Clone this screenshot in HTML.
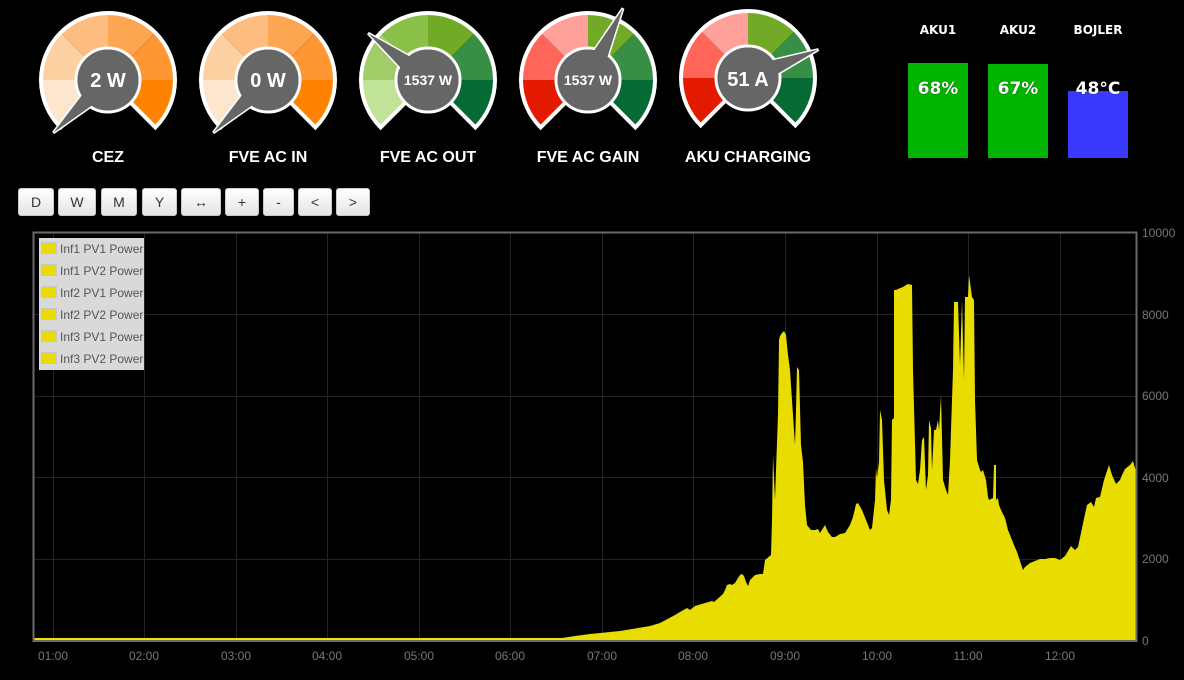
<!DOCTYPE html>
<html><head><meta charset="utf-8">
<style>
html,body{margin:0;padding:0;background:#000;width:1184px;height:680px;overflow:hidden;font-family:"Liberation Sans",Arial,sans-serif;}
.btn{position:absolute;top:188px;height:28px;border:1px solid #c8c8c8;border-radius:3px;background:linear-gradient(#fff,#e4e4e4);box-sizing:border-box;font-size:14px;color:#333;text-align:center;line-height:27px;}
.lbl{position:absolute;width:140px;text-align:center;color:#fff;font-weight:bold;font-size:16px;top:149px;}
.bl{position:absolute;width:80px;text-align:center;color:#fff;font-weight:bold;font-size:12px;top:23px;font-family:"DejaVu Sans",sans-serif;}
.bar{position:absolute;width:60px;}
.bt{position:absolute;width:80px;text-align:center;color:#fff;font-weight:bold;font-size:17px;top:79px;text-shadow:0 0 1px #000;font-family:"DejaVu Sans",sans-serif;}
.leg{position:absolute;left:39px;top:238px;width:105px;height:132px;background:#d9d9d9;}
.li{position:absolute;left:0;height:22px;font-size:12px;color:#555;line-height:22px;white-space:nowrap;}
.sw{display:inline-block;width:14px;height:10px;background:#e8dc00;border:1px solid #c8c8c8;margin:0 3px 0 2px;vertical-align:-1px;}
</style></head><body>
<svg width="1184" height="180" style="position:absolute;left:0;top:0" font-family="Liberation Sans, Arial, sans-serif">
<defs>
<path id="w" d="M0,0 L-47.38,47.38 A67,67 0 0 1 -67,0 Z"/>
<path id="ol" d="M0,0 L-47.38,47.38 A67,67 0 1 1 47.38,47.38 Z" fill="none" stroke="#fff" stroke-width="4" stroke-linejoin="miter"/>
<polygon id="nd" points="-8,-24 0,-76 8,-24"/>
</defs>
<g transform="translate(108,80)">
<use href="#w" fill="#fee6ce"/><use href="#w" fill="#fdd0a2" transform="rotate(45)"/><use href="#w" fill="#fdbd80" transform="rotate(90)"/><use href="#w" fill="#fda652" transform="rotate(135)"/><use href="#w" fill="#fd9633" transform="rotate(180)"/><use href="#w" fill="#ff8200" transform="rotate(225)"/>
<use href="#ol"/>
<circle r="32" fill="#666" stroke="#fff" stroke-width="3"/>
<g transform="rotate(-134)"><use href="#nd" fill="#666" stroke="#fff" stroke-width="3"/></g>
<circle r="30.5" fill="#666"/><g transform="rotate(-134)"><use href="#nd" fill="#666"/></g>
<text y="7" text-anchor="middle" fill="#fff" font-weight="bold" font-size="20">2 W</text>
</g>
<g transform="translate(268,80)">
<use href="#w" fill="#fee6ce"/><use href="#w" fill="#fdd0a2" transform="rotate(45)"/><use href="#w" fill="#fdbd80" transform="rotate(90)"/><use href="#w" fill="#fda652" transform="rotate(135)"/><use href="#w" fill="#fd9633" transform="rotate(180)"/><use href="#w" fill="#ff8200" transform="rotate(225)"/>
<use href="#ol"/>
<circle r="32" fill="#666" stroke="#fff" stroke-width="3"/>
<g transform="rotate(-134)"><use href="#nd" fill="#666" stroke="#fff" stroke-width="3"/></g>
<circle r="30.5" fill="#666"/><g transform="rotate(-134)"><use href="#nd" fill="#666"/></g>
<text y="7" text-anchor="middle" fill="#fff" font-weight="bold" font-size="20">0 W</text>
</g>
<g transform="translate(428,80)">
<use href="#w" fill="#c0e398"/><use href="#w" fill="#a0cd68" transform="rotate(45)"/><use href="#w" fill="#8bc048" transform="rotate(90)"/><use href="#w" fill="#70aa26" transform="rotate(135)"/><use href="#w" fill="#388e44" transform="rotate(180)"/><use href="#w" fill="#066a35" transform="rotate(225)"/>
<use href="#ol"/>
<circle r="32" fill="#666" stroke="#fff" stroke-width="3"/>
<g transform="rotate(-52)"><use href="#nd" fill="#666" stroke="#fff" stroke-width="3"/></g>
<circle r="30.5" fill="#666"/><g transform="rotate(-52)"><use href="#nd" fill="#666"/></g>
<text y="5" text-anchor="middle" fill="#fff" font-weight="bold" font-size="14">1537 W</text>
</g>
<g transform="translate(588,80)">
<use href="#w" fill="#e31a00"/><use href="#w" fill="#ff6659" transform="rotate(45)"/><use href="#w" fill="#ffa09a" transform="rotate(90)"/><use href="#w" fill="#70aa26" transform="rotate(135)"/><use href="#w" fill="#388e44" transform="rotate(180)"/><use href="#w" fill="#066a35" transform="rotate(225)"/>
<use href="#ol"/>
<circle r="32" fill="#666" stroke="#fff" stroke-width="3"/>
<g transform="rotate(26)"><use href="#nd" fill="#666" stroke="#fff" stroke-width="3" transform="scale(1,1.05)"/></g>
<circle r="30.5" fill="#666"/><g transform="rotate(26)"><use href="#nd" fill="#666" transform="scale(1,1.05)"/></g>
<text y="5" text-anchor="middle" fill="#fff" font-weight="bold" font-size="14">1537 W</text>
</g>
<g transform="translate(748,78)">
<use href="#w" fill="#e31a00"/><use href="#w" fill="#ff6659" transform="rotate(45)"/><use href="#w" fill="#ffa09a" transform="rotate(90)"/><use href="#w" fill="#70aa26" transform="rotate(135)"/><use href="#w" fill="#388e44" transform="rotate(180)"/><use href="#w" fill="#066a35" transform="rotate(225)"/>
<use href="#ol"/>
<circle r="32" fill="#666" stroke="#fff" stroke-width="3"/>
<g transform="rotate(68)"><use href="#nd" fill="#666" stroke="#fff" stroke-width="3"/></g>
<circle r="30.5" fill="#666"/><g transform="rotate(68)"><use href="#nd" fill="#666"/></g>
<text y="8" text-anchor="middle" fill="#fff" font-weight="bold" font-size="20">51 A</text>
</g>
</svg>
<div class="lbl" style="left:38px">CEZ</div>
<div class="lbl" style="left:198px">FVE AC IN</div>
<div class="lbl" style="left:358px">FVE AC OUT</div>
<div class="lbl" style="left:518px">FVE AC GAIN</div>
<div class="lbl" style="left:678px">AKU CHARGING</div>

<div class="bl" style="left:898px">AKU1</div>
<div class="bl" style="left:978px">AKU2</div>
<div class="bl" style="left:1058px">BOJLER</div>
<div class="bar" style="left:908px;top:63px;height:95px;background:#00b400"></div>
<div class="bar" style="left:988px;top:64px;height:94px;background:#00b400"></div>
<div class="bar" style="left:1068px;top:91px;height:67px;background:#3a3aff"></div>
<div class="bt" style="left:898px">68%</div>
<div class="bt" style="left:978px">67%</div>
<div class="bt" style="left:1058px">48°C</div>

<div class="btn" style="left:18px;width:36px">D</div>
<div class="btn" style="left:58px;width:38px">W</div>
<div class="btn" style="left:101px;width:36px">M</div>
<div class="btn" style="left:142px;width:35px">Y</div>
<div class="btn" style="left:181px;width:40px">↔</div>
<div class="btn" style="left:225px;width:34px">+</div>
<div class="btn" style="left:263px;width:31px">-</div>
<div class="btn" style="left:298px;width:34px">&lt;</div>
<div class="btn" style="left:336px;width:34px">&gt;</div>

<svg width="1184" height="460" style="position:absolute;left:0;top:220px" font-family="Liberation Sans, Arial, sans-serif">
<g transform="translate(0,-220)">
<g stroke="#232323" stroke-width="1">
<line x1="53.5" y1="232" x2="53.5" y2="641"/><line x1="144.5" y1="232" x2="144.5" y2="641"/><line x1="236.5" y1="232" x2="236.5" y2="641"/><line x1="327.5" y1="232" x2="327.5" y2="641"/><line x1="419.5" y1="232" x2="419.5" y2="641"/><line x1="510.5" y1="232" x2="510.5" y2="641"/><line x1="602.5" y1="232" x2="602.5" y2="641"/><line x1="693.5" y1="232" x2="693.5" y2="641"/><line x1="785.5" y1="232" x2="785.5" y2="641"/><line x1="877.5" y1="232" x2="877.5" y2="641"/><line x1="968.5" y1="232" x2="968.5" y2="641"/><line x1="1060.5" y1="232" x2="1060.5" y2="641"/>
<line x1="33" y1="314.5" x2="1137" y2="314.5"/><line x1="33" y1="396.5" x2="1137" y2="396.5"/><line x1="33" y1="477.5" x2="1137" y2="477.5"/><line x1="33" y1="559.5" x2="1137" y2="559.5"/>
</g>
<polygon fill="#e8dc00" points="34,641 34,638 562,638 575,636 590,634 620,631 650,626 660,623 675,615 680,612 687,608 690,610 695,606 705,603 712,601 714,602 723,594 725,590 727,585 730,584 732,585 735,583 738,578 740,575 742,574 744,576 746,582 748,586 750,580 755,575 760,574 763,574 765,560 771,555 772,520 773,455 775,500 776,470 778,415 779,340 780,336 782,333 784,331 786,335 788,355 790,370 792,400 795,445 796,410 797,367 799,370 801,445 803,462 805,505 807,525 811,530 815,530 818,529 820,533 825,525 828,532 832,537 835,537 840,534 845,533 850,525 853,517 856,504 858,503 862,510 870,530 872,528 875,500 876,468 877,478 879,462 880,410 882,420 884,480 887,510 889,515 891,500 892,420 894,418 894,290 896,290 898,289 903,287 906,285 908,284 912,285 913,370 916,480 918,484 920,470 922,440 924,437 926,490 928,475 929,420 931,428 932,470 934,430 936,430 938,420 939,430 941,395 943,480 946,490 948,495 950,460 953,370 954,302 958,302 960,365 962,300 964,380 965,297 968,297 969,275 972,297 974,300 975,400 977,460 980,470 981,472 983,470 986,480 988,497 989,500 993,498 994,465 996,465 996,500 998,498 999,505 1001,510 1005,518 1008,530 1012,540 1014,545 1017,552 1023,570 1025,567 1030,563 1035,561 1040,559 1045,559 1050,558 1055,558 1060,560 1065,556 1071,546 1075,550 1078,547 1082,528 1087,505 1091,502 1094,507 1096,498 1100,497 1104,480 1109,465 1112,475 1116,484 1120,480 1122,475 1125,469 1130,465 1133,461 1135,468 1136,470 1136,641"/>
<line x1="34" y1="639.5" x2="565" y2="639.5" stroke="#f0e400" stroke-width="2"/>
<rect x="33.5" y="232.5" width="1103" height="408.5" fill="none" stroke="#6a6a6a" stroke-width="2"/>
<g fill="#777" font-size="12">
<text x="1142" y="237">10000</text><text x="1142" y="319">8000</text><text x="1142" y="400">6000</text><text x="1142" y="482">4000</text><text x="1142" y="563">2000</text><text x="1142" y="645">0</text>
</g>
<g fill="#777" font-size="12" text-anchor="middle">
<text x="53" y="660">01:00</text><text x="144" y="660">02:00</text><text x="236" y="660">03:00</text><text x="327" y="660">04:00</text><text x="419" y="660">05:00</text><text x="510" y="660">06:00</text><text x="602" y="660">07:00</text><text x="693" y="660">08:00</text><text x="785" y="660">09:00</text><text x="877" y="660">10:00</text><text x="968" y="660">11:00</text><text x="1060" y="660">12:00</text>
</g>
</g>
</svg>
<div class="leg">
<div class="li" style="top:0"><span class="sw"></span>Inf1 PV1 Power</div>
<div class="li" style="top:22px"><span class="sw"></span>Inf1 PV2 Power</div>
<div class="li" style="top:44px"><span class="sw"></span>Inf2 PV1 Power</div>
<div class="li" style="top:66px"><span class="sw"></span>Inf2 PV2 Power</div>
<div class="li" style="top:88px"><span class="sw"></span>Inf3 PV1 Power</div>
<div class="li" style="top:110px"><span class="sw"></span>Inf3 PV2 Power</div>
</div>
</body></html>
